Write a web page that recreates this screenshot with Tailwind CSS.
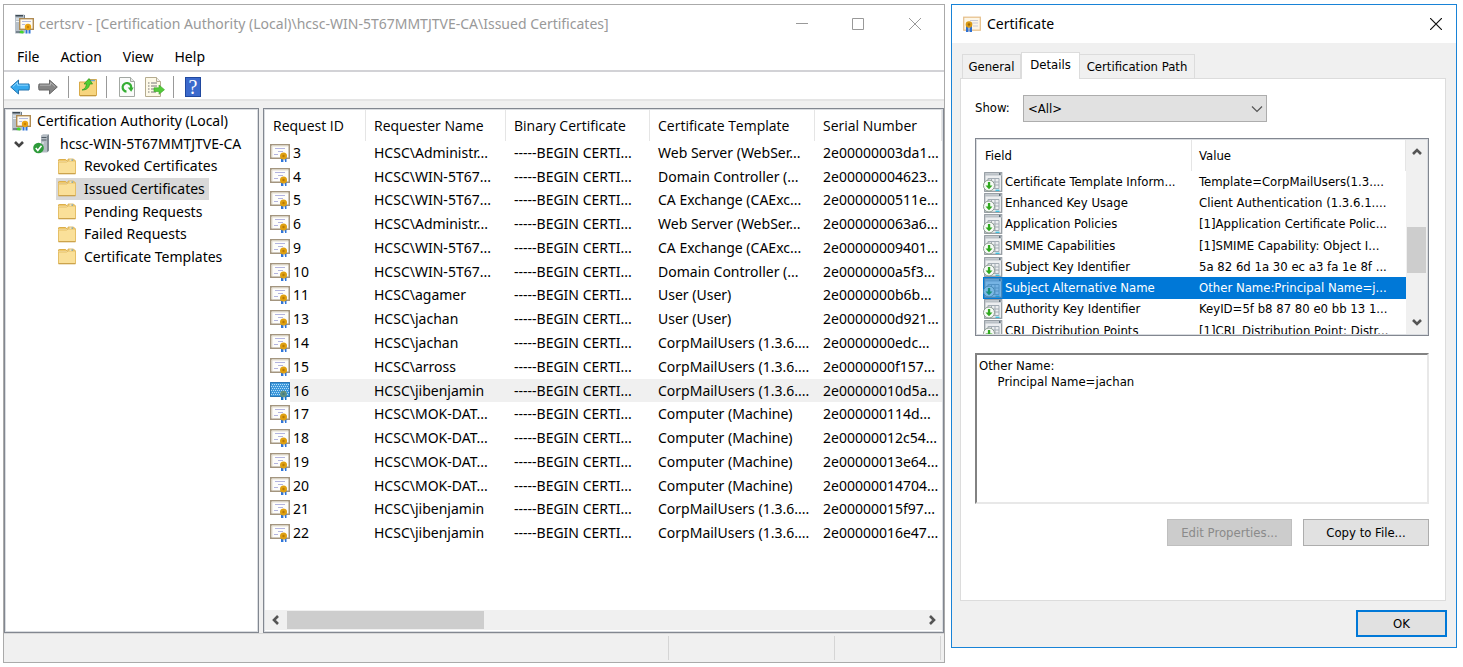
<!DOCTYPE html>
<html lang="en">
<head>
<meta charset="utf-8">
<title>certsrv - Issued Certificates</title>
<script src="https://cdn.jsdelivr.net/npm/@tailwindcss/browser@4"></script>
</head>
<body class="bg-white text-black">
<svg class="hidden" aria-hidden="true">
  <symbol id="cert" viewBox="0 0 20 18">
    <rect x="0.75" y="0.75" width="18.5" height="13.5" fill="#fdfdfb" stroke="#a3957f" stroke-width="1.5"/>
    <path d="M2 13V2h16" fill="none" stroke="#e3dccf"/>
    <path d="M5 4.500h10M8 7.500h5M4 10.500h4" stroke="#b3b4df"/>
    <path d="M11 13.500h2.400v4.500h-2.400zM14.300 13.500h2.200v4.500h-1.400z" fill="#2f74d8"/>
    <circle cx="13.500" cy="12" r="3.500" fill="#dfa010"/>
    <circle cx="13.500" cy="12" r="1.200" fill="#b97a06"/>
  </symbol>
  <symbol id="certsel" viewBox="0 0 20 18">
    <rect width="20" height="15" fill="#3c98dc"/>
    <path d="M2 2.500h17M1 4.500h17M2 6.500h17M1 8.500h17M2 10.500h17M1 12.500h17" stroke="#b5dcf5" stroke-dasharray="1 1"/>
    <path d="M.5 .5h19v14H.5z" fill="none" stroke="#2a76b4"/>
    <path d="M11 13.500h2.400v4.500h-2.400zM14.300 13.500h2.200v4.500h-1.400z" fill="#1673c8"/>
    <circle cx="13.500" cy="12" r="3.300" fill="#63907d"/><circle cx="13.500" cy="12" r="1.200" fill="#3c7a8c"/>
  </symbol>
  <symbol id="authority" viewBox="0 0 20 20">
    <path d="M1 .5h9l1 1v17l-1 1H1z" fill="#b7c0c8"/>
    <path d="M1.500 1h7.500v1.500H1.500z" fill="#3d4a55"/><path d="M2 5h7M2 7.500h4" stroke="#eef2f5" stroke-width="1.200"/>
    <path d="M10.500 1v3" stroke="#717e8a"/>
    <rect x="5.700" y="4.700" width="13.600" height="10.600" fill="#fdfaf3" stroke="#b08b52" stroke-width="1.400"/>
    <path d="M8 7.500h9M8 10.500h3" stroke="#b3bbdf"/>
    <path d="M11.500 14h2v5.500h-2zM14.500 14h2v5.500h-2z" fill="#2f74d8"/>
    <circle cx="14" cy="13" r="3.200" fill="#eaa515"/><circle cx="14" cy="13" r="1.200" fill="#c98204"/>
    <path d="M5 19c1-3 3-3 5-1l-1 1.500z" fill="#45d62b"/><path d="M2 18h4" stroke="#62707c" stroke-width="1.500"/>
  </symbol>
  <symbol id="server" viewBox="0 0 17 20">
    <path d="M8 1.500l2-1.300h6V17l-2 1.500H8z" fill="#b4bcc3"/><path d="M14 2v16l2-1.500V.5z" fill="#7c868f"/>
    <path d="M8.500 3.500h5M8.500 6h5" stroke="#515c66" stroke-width="1.200"/><path d="M9 9h2" stroke="#edf1f3"/>
    <circle cx="5.500" cy="14" r="5.300" fill="#2d9b3a"/><path d="M2.800 14l2 2.400 3.700-4.600" fill="none" stroke="#fff" stroke-width="1.600"/>
  </symbol>
  <symbol id="folder" viewBox="0 0 18 17">
    <path d="M.5 3.500V2.200q0-.7.7-.7h6.500l2 2" fill="#eec86c" stroke="#dcae49"/>
    <path d="M10 1h5.500l2 2v4H9z" fill="#efc867" stroke="#d9ae52" stroke-width=".8"/><path d="M11.500 2.300h3.500" stroke="#fff" stroke-width="1.400"/><path d="M13.500 2.300h1.500" stroke="#4b96cf" stroke-width="1.400"/>
    <path d="M.5 4h8l2-1h7v12.500H.5z" fill="#fae099" stroke="#e5bf67"/>
    <path d="M.5 15.700h17" stroke="#c9a04a" stroke-width="1.200"/>
  </symbol>
  <symbol id="ext" viewBox="0 0 20 20">
    <rect x="1.700" y=".7" width="17" height="18.600" fill="#eceef0" stroke="#8f979d" stroke-width="1.200"/>
    <path d="M2 2.500h17" stroke="#bac1c6" stroke-width="2"/><path d="M16 2h1.500" stroke="#3e4f5b" stroke-width="1.400"/>
    <path d="M5 6.500h11M5 6.500v4M8.500 6.500v3M12 6.500v10M16 6.500v10M9 10h7M11 13h5M11 16.500h5" stroke="#a3acb4" fill="none"/>
    <path d="M12.500 18.300h4" stroke="#41bfdc" stroke-width="1.400"/>
    <circle cx="6" cy="13.500" r="5.500" fill="#f7faf7" stroke="#8c9a90"/>
    <path d="M4.900 10h2.300v3.500h2.300L6 17.300l-3.500-3.800h2.400z" fill="#30a91f"/>
  </symbol>
  <symbol id="chev" viewBox="0 0 12 12"><path d="M2 4l4 4 4-4" fill="none" stroke="currentColor" stroke-width="2.600"/></symbol>
</svg>
<div class="flex min-h-screen items-stretch gap-1.5 pt-1 pr-1.5 pb-1 pl-[3px]">

  <main class="flex min-w-0 flex-1 flex-col border border-[#aaaaaa] bg-[#f0f0f0] font-['Noto_Sans','Open_Sans',sans-serif] text-sm">
    <header class="flex h-[38px] items-center bg-white pl-2.5 text-[#999999]">
      <svg class="mr-[5px] size-5"><use href="#authority"/></svg>
      <h1 class="flex-1 whitespace-nowrap">certsrv - [Certification Authority (Local)\hcsc-WIN-5T67MMTJTVE-CA\Issued Certificates]</h1>
      <button class="flex w-14 justify-center" aria-label="Minimize"><svg class="size-3" viewBox="0 0 12 12"><path d="M0 5.500h12" stroke="#999"/></svg></button>
      <button class="flex w-14 justify-center" aria-label="Maximize"><svg class="size-3" viewBox="0 0 12 12"><path d="M.5 .5h11v11H.5z" fill="none" stroke="#999"/></svg></button>
      <button class="flex w-[58px] justify-center" aria-label="Close"><svg class="size-3" viewBox="0 0 12 12"><path d="M0 0l12 12M12 0L0 12" stroke="#999"/></svg></button>
    </header>
    <nav class="flex h-[29px] items-center gap-[21px] border-b-2 border-[#d2d2d6] bg-white pl-[13px]">
      <button>File</button><button>Action</button><button>View</button><button>Help</button>
    </nav>
    <div class="flex h-[29px] items-center border-b-2 border-[#e5e5e5] bg-white pt-0.5 pl-1.5">
      <button class="mr-2" aria-label="Back"><svg class="h-4 w-5" viewBox="0 0 20 16"><path d="M.7 8L8.500 1v4H19q.7 3 0 6H8.500v4z" fill="#36a9ee" stroke="#2675ae"/><path d="M3 7.500L7.500 3.500v2.700H18" fill="none" stroke="#8bd6ff"/></svg></button>
      <button class="mr-2.5" aria-label="Forward"><svg class="h-4 w-5" viewBox="0 0 20 16"><path d="M19.300 8L11.500 1v4H1q-.7 3 0 6h10.500v4z" fill="#858585" stroke="#686868"/><path d="M17 7.500L12.500 3.500v2.700H2" fill="none" stroke="#b3b3b3"/></svg></button>
      <span class="mr-2.5 h-[22px] w-px bg-[#999]"></span>
      <button class="mr-[9px]" aria-label="Up one level"><svg class="h-5 w-[18px]" viewBox="0 0 18 20"><path d="M.5 5h7l2-2.500h8V18.500H.5z" fill="#f7d57f" stroke="#d8aa48"/><path d="M11 3.500h5" stroke="#6fa7c9" stroke-width="1.400"/><path d="M1 18.800h16" stroke="#bd9038"/><path d="M3 13c3-1 4-3 4.500-6H5l5-5.500L13.500 7h-2.700c-1 4-3 6-7.800 6z" fill="#4fcf34" stroke="#31961f" stroke-width=".7"/></svg></button>
      <span class="mr-3 h-[22px] w-px bg-[#999]"></span>
      <button class="mr-2.5" aria-label="Refresh"><svg class="h-5 w-4" viewBox="0 0 16 20"><path d="M.5 .5h11l4 4v15H.5z" fill="#fafbfa" stroke="#a3a8a3"/><path d="M11.500 .5v4h4" fill="#e5e8e5" stroke="#a3a8a3"/><path d="M7.500 14.600a4.300 4.300 0 1 1 4.600-3.300" fill="none" stroke="#35ae33" stroke-width="2.200"/><path d="M8.700 10.500h6l-2.500 4.300z" fill="#35ae33"/></svg></button>
      <button class="mr-2" aria-label="Export list"><svg class="h-5 w-5" viewBox="0 0 20 20"><path d="M.5 .5h11l4 4v15H.5z" fill="#fdf9e8" stroke="#b5ac90"/><path d="M11.500 .5v4h4" fill="#eee" stroke="#b5ac90"/><path d="M3 6h1.500M6 6h6M3 9h1.500M6 9h6M3 12h1.500M6 12h3M3 15h1.500M6 15h5" stroke="#777"/><path d="M9 10.800h5V8l5.500 4.700-5.500 4.600v-2.800H9z" fill="#53cb3a" stroke="#3aa527" stroke-width=".6"/></svg></button>
      <span class="mr-[11px] h-[22px] w-px bg-[#999]"></span>
      <button class="flex h-5 w-4 items-center justify-center border border-[#20489e] bg-[#3b69cc] font-['Liberation_Serif',serif] text-xl text-white" aria-label="Help">?</button>
    </div>

    <div class="mt-[7px] flex flex-1 gap-1">
      <aside class="w-[255px] shrink-0 border border-[#828790] bg-white shadow-[inset_0_0_0_1px_#d9dce0]">
        <ul id="tree" class="mt-px grid h-[158px] auto-rows-fr"></ul>
      </aside>
      <section class="flex min-w-0 flex-1 flex-col border border-[#828790] bg-white shadow-[inset_0_0_0_1px_#d9dce0]">
        <table class="m-px mb-0 flex flex-1 flex-col text-left whitespace-nowrap">
          <thead><tr id="cols" class="grid h-[31px] grid-cols-[101px_140px_144px_165px_1fr] font-['Open_Sans','Noto_Sans',sans-serif]"></tr></thead>
          <tbody id="rows" class="grid h-[404px] auto-rows-fr"></tbody>
        </table>
        <div class="mx-px mb-0.5 flex h-5 items-center justify-between bg-[#f0f0f0]">
          <button class="flex w-[22px] justify-center" aria-label="Scroll left"><svg class="size-3 rotate-90 text-[#555]"><use href="#chev"/></svg></button>
          <span class="h-[18px] w-[197px] bg-[#cdcdcd]"></span>
          <button class="ml-auto flex w-5 justify-center" aria-label="Scroll right"><svg class="size-3 -rotate-90 text-[#555]"><use href="#chev"/></svg></button>
        </div>
      </section>
    </div>
    <footer class="flex h-[29px] justify-end border-t border-[#d9d9d9] py-0.5 pr-[3px]">
      <span class="w-[166px] border-l border-[#d5d5d5]"></span>
      <span class="w-[107px] border-x border-[#d5d5d5]"></span>
    </footer>
  </main>

  <section role="dialog" aria-labelledby="dlg" class="flex w-[506px] shrink-0 flex-col self-start border border-[#1883d7] bg-[#f0f0f0] font-['DejaVu_Sans_Condensed','DejaVu_Sans',sans-serif] text-[13px]">
    <header class="flex h-[38px] items-center bg-white pr-3.5 pl-[11px]">
      <svg class="mr-1.5 h-[18px] w-[18px]" viewBox="0 0 18 18"><rect x=".7" y="2.200" width="16.600" height="13" fill="#fdf6e7" stroke="#e5bd86" stroke-width="1.200"/><path d="M7 5.500h8M9 8h6M10 11h5" stroke="#c9cbd5"/><path d="M3 11h2.500v6H3zM6.500 11H9v6H6.500z" fill="#2c6fd2"/><circle cx="6" cy="9.500" r="3.300" fill="#d99a14"/><circle cx="6" cy="9.500" r="1.200" fill="#9d6807"/></svg>
      <h2 id="dlg" class="flex-1 font-['Noto_Sans','Open_Sans',sans-serif] text-sm">Certificate</h2>
      <button aria-label="Close"><svg class="size-3" viewBox="0 0 12 12"><path d="M0 0l12 12M12 0L0 12" stroke="#111" stroke-width="1.200"/></svg></button>
    </header>
    <div role="tablist" class="mt-[9px] flex items-end pl-2.5">
      <button role="tab" class="h-6 w-[59px] border border-b-0 border-[#dcdcdc]">General</button>
      <button role="tab" aria-selected="true" class="relative z-10 -mb-px h-[27px] w-[59px] border border-b-0 border-[#dcdcdc] bg-white pb-0.5">Details</button>
      <button role="tab" class="h-6 w-[115px] border border-b-0 border-l-0 border-[#dcdcdc]">Certification Path</button>
    </div>
    <div class="mr-2.5 ml-2 border border-[#dcdcdc] bg-white pt-4 pr-4 pb-[54px] pl-3.5">
      <div class="flex items-center">
        <label for="show" class="w-12 pb-0.5">Show:</label>
        <div class="relative h-[27px] w-[244px]">
          <select id="show" class="size-full appearance-none border border-[#adadad] bg-[#e1e1e1] px-1"><option>&lt;All&gt;</option></select>
          <svg class="pointer-events-none absolute top-2 right-1 size-3 text-[#555]" viewBox="0 0 12 12"><path d="M1 3.500L6 8.500l5-5" fill="none" stroke="currentColor" stroke-width="1.200"/></svg>
        </div>
      </div>
      <div class="mt-4 flex h-[198px] border border-[#828790] bg-white p-px shadow-[inset_0_0_0_1px_#d9dce0]">
        <table class="flex min-w-0 flex-1 flex-col overflow-hidden text-left whitespace-nowrap">
          <thead><tr class="grid h-[31px] grid-cols-[215px_1fr]"><th class="flex items-center border-r border-[#e5e5e5] pl-2 font-normal">Field</th><th class="flex items-center border-r border-[#e5e5e5] pl-[7px] font-normal">Value</th></tr></thead>
          <tbody id="fields" class="grid h-[170px] shrink-0 auto-rows-fr"></tbody>
        </table>
        <div class="flex w-[21px] flex-col items-center bg-[#f0f0f0]">
          <button class="flex h-6 items-center" aria-label="Scroll up"><svg class="size-3 rotate-180 text-[#555]"><use href="#chev"/></svg></button>
          <span class="mt-[63px] h-[46px] w-[19px] bg-[#cdcdcd]"></span>
          <button class="mt-auto flex h-6 items-center" aria-label="Scroll down"><svg class="size-3 text-[#555]"><use href="#chev"/></svg></button>
        </div>
      </div>
      <textarea readonly aria-label="Field value" class="mt-[17px] block h-[151px] w-full resize-none border-2 border-t-[#828282] border-r-[#e8e8e8] border-b-[#e8e8e8] border-l-[#828282] bg-white px-0.5 pt-[3px] leading-4 outline-none">Other Name:
     Principal Name=jachan</textarea>
      <div class="mt-[15px] flex justify-end gap-[11px]">
        <button disabled class="h-[27px] w-[125px] border border-[#bfbfbf] bg-[#cccccc] text-[#8a8a8a]">Edit Properties...</button>
        <button class="h-[27px] w-[126px] border border-[#adadad] bg-[#e1e1e1]">Copy to File...</button>
      </div>
    </div>
    <div class="flex justify-end pt-[9px] pr-[9px] pb-2.5">
      <button class="h-[27px] w-[91px] border-2 border-[#0078d7] bg-[#e1e1e1]">OK</button>
    </div>
  </section>
</div>
<script>
const tree = ['Revoked Certificates', 'Issued Certificates', 'Pending Requests', 'Failed Requests', 'Certificate Templates'];
document.getElementById('tree').innerHTML =
  '<li class="flex items-center pl-1.5"><svg class="mr-1.5 size-5"><use href="#authority"/></svg>Certification Authority (Local)</li>' +
  '<li class="flex items-center pl-2 whitespace-nowrap"><svg class="mr-2 size-3 text-[#444]"><use href="#chev"/></svg><svg class="mr-2.5 h-5 w-[17px]"><use href="#server"/></svg>hcsc-WIN-5T67MMTJTVE-CA</li>' +
  tree.map((t, i) => `<li class="flex pl-[51px]"><span class="flex items-center pr-1 pl-0.5 ${i === 1 ? 'bg-[#d9d9d9]' : ''}"><svg class="mr-2 h-[17px] w-[18px]"><use href="#folder"/></svg>${t}</span></li>`).join('');

document.getElementById('cols').innerHTML = ['Request ID', 'Requester Name', 'Binary Certificate', 'Certificate Template', 'Serial Number']
  .map(c => `<th class="flex items-center border-r border-[#e5e5e5] pl-2 font-normal">${c}</th>`).join('');

const W = 'Web Server (WebSer...', D = 'Domain Controller (...', X = 'CA Exchange (CAExc...', U = 'User (User)', M = 'CorpMailUsers (1.3.6....', C = 'Computer (Machine)';
const rows = [
  [3, 'Administr...', W, '2e00000003da1...'], [4, 'WIN-5T67...', D, '2e00000004623...'], [5, 'WIN-5T67...', X, '2e0000000511e...'],
  [6, 'Administr...', W, '2e000000063a6...'], [9, 'WIN-5T67...', X, '2e00000009401...'], [10, 'WIN-5T67...', D, '2e0000000a5f3...'],
  [11, 'agamer', U, '2e0000000b6b...'], [13, 'jachan', U, '2e0000000d921...'], [14, 'jachan', M, '2e0000000edc...'],
  [15, 'arross', M, '2e0000000f157...'], [16, 'jibenjamin', M, '2e00000010d5a...'], [17, 'MOK-DAT...', C, '2e000000114d...'],
  [18, 'MOK-DAT...', C, '2e00000012c54...'], [19, 'MOK-DAT...', C, '2e00000013e64...'], [20, 'MOK-DAT...', C, '2e00000014704...'],
  [21, 'jibenjamin', M, '2e00000015f97...'], [22, 'jibenjamin', M, '2e00000016e47...']];
document.getElementById('rows').innerHTML = rows.map(([id, who, tpl, serial]) => {
  const sel = id === 16, bg = sel ? 'bg-[#f0f0f0]' : '';
  return `<tr class="grid grid-cols-[101px_140px_144px_165px_1fr]"><td class="flex pl-[5px]"><svg class="h-[18px] w-5 self-center"><use href="${sel ? '#certsel' : '#cert'}"/></svg><span class="flex flex-1 items-center pl-[3px] ${bg}">${id}</span></td>` +
    ['HCSC\\' + who, '-----BEGIN CERTI...', tpl, serial].map(v => `<td class="flex items-center pl-2 ${bg}">${v}</td>`).join('') + '</tr>';
}).join('');

const fields = [
  ['Certificate Template Inform...', 'Template=CorpMailUsers(1.3....'], ['Enhanced Key Usage', 'Client Authentication (1.3.6.1....'],
  ['Application Policies', '[1]Application Certificate Polic...'], ['SMIME Capabilities', '[1]SMIME Capability: Object I...'],
  ['Subject Key Identifier', '5a 82 6d 1a 30 ec a3 fa 1e 8f ...'], ['Subject Alternative Name', 'Other Name:Principal Name=j...'],
  ['Authority Key Identifier', 'KeyID=5f b8 87 80 e0 bb 13 1...'], ['CRL Distribution Points', '[1]CRL Distribution Point: Distr...']];
document.getElementById('fields').innerHTML = fields.map(([f, v], i) => {
  const bg = i === 5 ? 'bg-[#0078d7] text-white' : '';
  return `<tr class="grid grid-cols-[215px_1fr]"><td class="flex pl-1.5"><span class="flex items-center ${i === 5 ? 'bg-[#0078d7]' : ''}"><svg class="size-5 ${i === 5 ? 'opacity-50' : ''}"><use href="#ext"/></svg></span><span class="flex flex-1 items-center pl-0.5 ${bg}">${f}</span></td><td class="flex items-center pl-[7px] ${bg}">${v}</td></tr>`;
}).join('');
</script>
</body>
</html>
